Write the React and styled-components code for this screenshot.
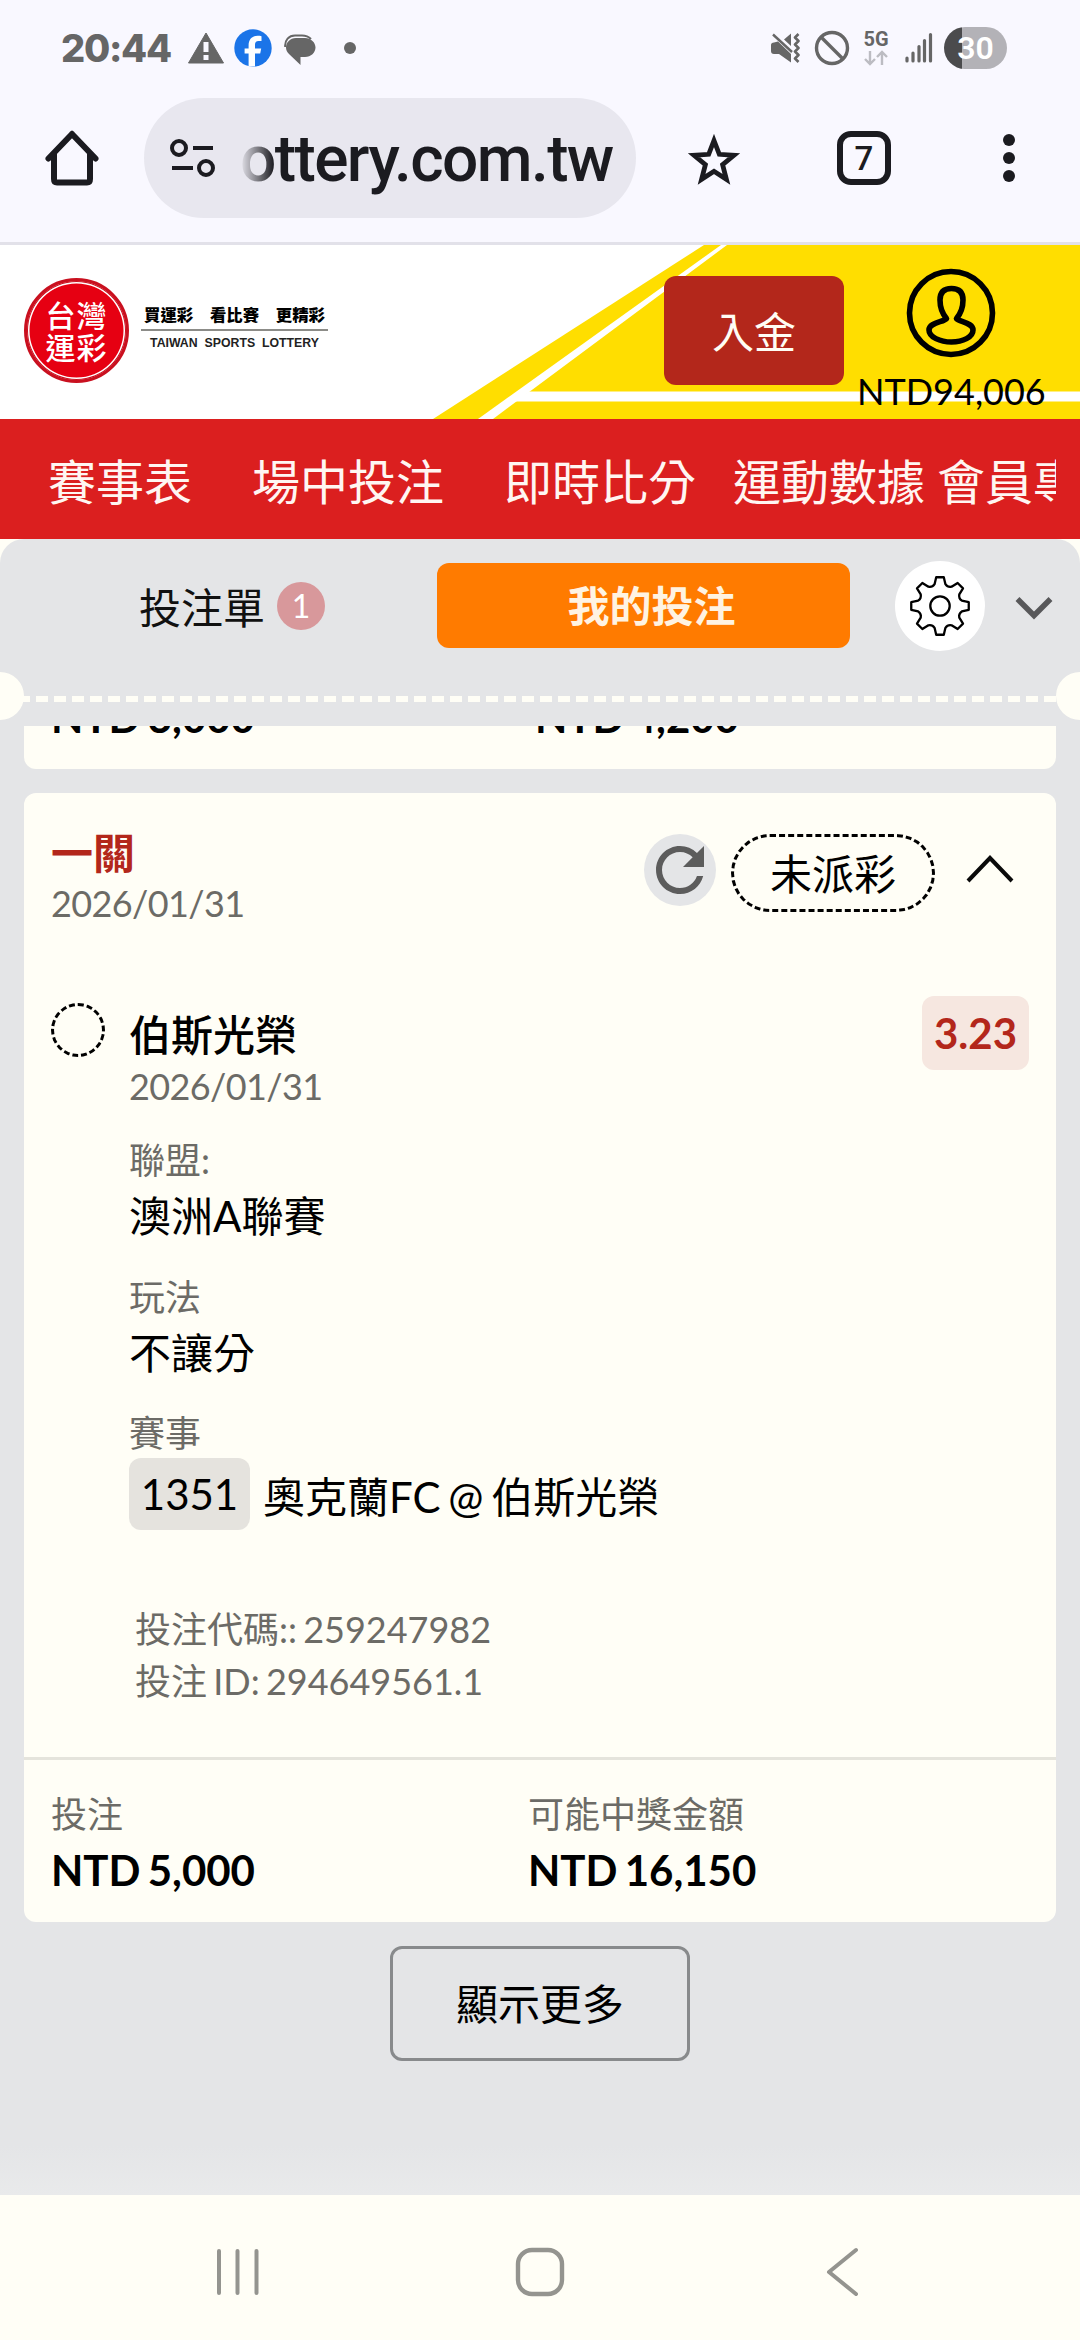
import styled, { createGlobalStyle } from "styled-components";
import { MdRefresh } from "react-icons/md";

const menu = [
    { label: "賽事表", gap: 60 },
    { label: "場中投注", gap: 60 },
    { label: "即時比分", gap: 37 },
    { label: "運動數據", gap: 12 },
    { label: "會員專區", gap: 0 },
];

const details = [
    { label: "聯盟:", value: "澳洲A聯賽" },
    { label: "玩法", value: "不讓分" },
];

export default function App(){
    return (
        <Screen>
            <GlobalStyle />
            <StatusBar />
            <BrowserBar />
            <SiteHeader />
            <Menu>
                <MenuItems>
                    {menu.map((item) => (
                        <MenuItem key={item.label} $gap={item.gap}>{item.label}</MenuItem>
                    ))}
                </MenuItems>
            </Menu>
            <PanelWrap>
                <Panel>
                    <Tabs />
                    <TearLine />
                    <BetList>
                        <Card $cut>
                            <CardFooter stake="NTD 3,000" prize="NTD 4,200" shift={7} />
                        </Card>
                        <BetCard />
                        <MoreButton>顯示更多</MoreButton>
                    </BetList>
                </Panel>
            </PanelWrap>
            <SystemNav />
        </Screen>
    );
}

function StatusBar(){
    return (
        <Status>
            <Clock>20:44</Clock>
            <svg width="36" height="32" viewBox="0 0 36 32">
                <path d="M18 1 L35.5 31 H0.5 Z" fill="#666" stroke="#666" strokeWidth="1" strokeLinejoin="round" />
                <rect x="15.5" y="10" width="5" height="10" fill="#f9f8ff" />
                <rect x="15.5" y="23" width="5" height="5" fill="#f9f8ff" />
            </svg>
            <Facebook width="38" height="38" viewBox="0 0 38 38">
                <circle cx="19" cy="19" r="18.7" fill="#1b74e8" />
                <path d="M14.6 37.5V24.6h-4v-5h4v-3.2c0-6.3 3.4-9.6 9-9.6 1.7 0 2.8.1 3.9.4v4.9h-2.9c-2.6 0-3.6 1.2-3.6 3.9v3.6h6.2l-1 5H21V37.5z" fill="#fff" />
            </Facebook>
            <Chat width="32" height="32" viewBox="0 0 32 32">
                <path d="M1.2 13C0.5 6 5 1.5 11 1.5H18C22 1.5 25 3 27 5" fill="none" stroke="#666" strokeWidth="2" />
                <path d="M12 4H21C27 4 31.5 8.5 31.5 13.5S27 23 21 23H16.5V31L5 20C3 18 2 16 2 13.5C2 8.5 6 4 12 4Z" fill="#666" />
            </Chat>
            <Dot />
            <Spacer />
            <svg width="30" height="32" viewBox="0 0 30 32">
                <path d="M1 13Q1 10.5 4 10.5L8 9.5L21 22V30.5L9 22H4Q1 22 1 19ZM14 7.5L21 1.5V14Z" fill="#666" />
                <path d="M3 2.5L22 20" stroke="#666" strokeWidth="2.4" />
                <path d="M28.5 2L25 5.5L28.5 9L25 12.5L28.5 16L25 19.5L28.5 23L25 26.5L28.5 30" fill="none" stroke="#666" strokeWidth="2.6" strokeLinejoin="round" />
            </svg>
            <Blocked width="36" height="36" viewBox="0 0 36 36">
                <circle cx="18" cy="18" r="15.5" fill="none" stroke="#666" strokeWidth="3.4" />
                <path d="M7.5 7.5L28.5 28.5" stroke="#666" strokeWidth="3.4" />
            </Blocked>
            <Network>
                <span>5G</span>
                <svg width="24" height="16" viewBox="0 0 24 16">
                    <path d="M6 1V14M1 9L6 14L11 9M18 15V2M13 7L18 2L23 7" fill="none" stroke="#bcbcc2" strokeWidth="2.4" />
                </svg>
            </Network>
            <svg width="28" height="32" viewBox="0 0 28 32">
                <path d="M2 26V29M8 21V29M14 14.5V29M19.5 8.5V29M25.5 2.5V29" stroke="#666" strokeWidth="3.2" strokeLinecap="round" />
            </svg>
            <Battery>30</Battery>
        </Status>
    );
}

function BrowserBar(){
    return (
        <Toolbar>
            <svg width="56" height="58" viewBox="0 0 56 58">
                <path d="M28 5L4.5 29.5M28 5L51.5 29.5" stroke="#1b1b20" strokeWidth="6" strokeLinecap="round" />
                <path d="M10 25V50Q10 53.5 13 53.5H43Q46 53.5 46 50V25" fill="none" stroke="#1b1b20" strokeWidth="6" />
            </svg>
            <Address>
                <svg width="46" height="40" viewBox="0 0 46 40">
                    <g fill="none" stroke="#1b1b20" strokeWidth="4">
                        <circle cx="10" cy="10" r="7" />
                        <circle cx="37" cy="30" r="7" />
                        <path d="M24 10H44M3 30H24" />
                    </g>
                </svg>
                <Url>ottery.com.tw</Url>
            </Address>
            <Star width="54" height="52" viewBox="0 0 54 52">
                <path d="M27 6.5L32.3 20.3L47 21.3L35.6 30.7L39.4 45.3L27 37.3L14.6 45.3L18.4 30.7L7 21.3L21.7 20.3Z" fill="none" stroke="#1b1b20" strokeWidth="4.8" />
            </Star>
            <TabCount>7</TabCount>
            <Dots>
                <i /><i /><i />
            </Dots>
        </Toolbar>
    );
}

function SiteHeader(){
    return (
        <Header>
            <Stripes width="1080" height="174" viewBox="0 0 1080 174">
                <path d="M433 174L704 0H1080V174Z" fill="#ffde00" />
                <path d="M478 174L721 0H727L493 174Z" fill="#fff" />
                <path d="M514 156.5L529 146.5H1080V156.5Z" fill="#fff" />
            </Stripes>
            <Seal>
                <span>台灣</span>
                <span>運彩</span>
            </Seal>
            <Slogan>
                <p><span>買運彩</span><span>看比賽</span><span>更精彩</span></p>
                <small>TAIWAN SPORTS LOTTERY</small>
            </Slogan>
            <Deposit>入金</Deposit>
            <Account>
                <svg width="90" height="90" viewBox="0 0 90 90">
                    <g fill="none" stroke="#000" strokeWidth="5.6">
                        <circle cx="45" cy="45" r="41.5" />
                        <path d="M40.5 50.5C35 44 34 39 34 32C34 24 38 20.5 45.5 20.5S57 24 57 32C57 39 56 44 50.5 50.5C53 54 67 54.5 67 62C67 69 57 74 45.5 74S23 69 23 62C23 54.5 38 54 40.5 50.5Z" strokeLinejoin="round" />
                    </g>
                </svg>
                <Balance>NTD94,006</Balance>
            </Account>
        </Header>
    );
}

function Tabs(){
    return (
        <TabRow>
            <SlipTab>
                投注單
                <Counter>1</Counter>
            </SlipTab>
            <ActiveTab>我的投注</ActiveTab>
            <GearButton>
                <svg width="62" height="62" viewBox="-31 -31 62 62">
                    <g fill="none" stroke="#000" strokeWidth="2.3" strokeLinejoin="round">
                        <path d={gearPath()} />
                        <circle cx="0" cy="0" r="9.7" />
                    </g>
                </svg>
            </GearButton>
            <svg width="40" height="26" viewBox="0 0 40 26">
                <path d="M3.5 4L20 20.5L36.5 4" fill="none" stroke="#58585a" strokeWidth="5.5" />
            </svg>
        </TabRow>
    );
}

// eight teeth around the centre, with curved valleys between them
function gearPath(){
    const point = (deg, r) => {
        const a = (deg * Math.PI) / 180;
        return `${(r * Math.cos(a)).toFixed(2)} ${(r * Math.sin(a)).toFixed(2)}`;
    };
    let d = "";
    for (let i = 0; i < 8; i++) {
        const c = i * 45 - 90;
        d += `${i === 0 ? "M" : "L"}${point(c - 7.5, 29)}L${point(c + 7.5, 29)}L${point(c + 14, 22.5)}Q${point(c + 22.5, 20)} ${point(c + 31, 22.5)}`;
    }
    return d + "Z";
}

function BetCard(){
    return (
        <Card>
            <CardTop>
                <div>
                    <Title>一關</Title>
                    <DateText>2026/01/31</DateText>
                </div>
                <Actions>
                    <RefreshButton><MdRefresh /></RefreshButton>
                    <StatusPill>未派彩</StatusPill>
                    <svg width="50" height="30" viewBox="0 0 50 30">
                        <path d="M3 27L25 4L47 27" fill="none" stroke="#0a0a0a" strokeWidth="4" />
                    </svg>
                </Actions>
            </CardTop>
            <Leg>
                <Pending />
                <LegBody>
                    <Pick>伯斯光榮</Pick>
                    <DateText>2026/01/31</DateText>
                    {details.map((item) => (
                        <Detail key={item.label}>
                            <Muted>{item.label}</Muted>
                            <Value>{item.value}</Value>
                        </Detail>
                    ))}
                    <Detail>
                        <Muted>賽事</Muted>
                        <Match>
                            <MatchNumber>1351</MatchNumber>
                            奧克蘭FC @ 伯斯光榮
                        </Match>
                    </Detail>
                    <Codes>
                        <p>投注代碼:: 259247982</p>
                        <p>投注 ID: 294649561.1</p>
                    </Codes>
                </LegBody>
                <Odds>3.23</Odds>
            </Leg>
            <CardFooter stake="NTD 5,000" prize="NTD 16,150" line />
        </Card>
    );
}

function CardFooter(props){

    const {stake, prize, line, shift = 0} = props;

    return (
        <Footer $line={line} $shift={shift}>
            <div>
                <Muted>投注</Muted>
                <Amount>{stake}</Amount>
            </div>
            <div>
                <Muted>可能中獎金額</Muted>
                <Amount>{prize}</Amount>
            </div>
        </Footer>
    );
}

function SystemNav(){
    return (
        <NavBar>
            <svg width="50" height="50" viewBox="0 0 50 50">
                <path d="M6 4V46M24.5 4V46M43.5 4V46" stroke="#94948f" strokeWidth="4" strokeLinecap="round" />
            </svg>
            <svg width="50" height="50" viewBox="0 0 50 50">
                <rect x="3" y="3" width="44" height="44" rx="14" fill="none" stroke="#94948f" strokeWidth="4.4" />
            </svg>
            <svg width="50" height="50" viewBox="0 0 50 50">
                <path d="M39 3L12 25L39 47" fill="none" stroke="#94948f" strokeWidth="4" strokeLinecap="round" strokeLinejoin="round" />
            </svg>
        </NavBar>
    );
}

const GlobalStyle = createGlobalStyle`
    * {
        box-sizing: border-box;
        margin: 0;
        padding: 0;
    }

    body {
        font-family: Lato, "Noto Sans CJK TC", sans-serif;
        background: #fffef6;
        color: #000;
    }

    svg {
        display: block;
        flex-shrink: 0;
    }
`;

const Screen = styled.div`
    width: 1080px;
    height: 2340px;
    display: flex;
    flex-direction: column;
    overflow: hidden;
`;

const Status = styled.div`
    height: 96px;
    padding: 0 73px 0 61px;
    display: flex;
    align-items: center;
    background: #f9f8ff;
    color: #666;
`;

const Clock = styled.span`
    width: 127px;
    font-family: Inter, sans-serif;
    font-size: 38px;
    font-weight: 800;
    letter-spacing: -1.3px;
    white-space: nowrap;
`;

const Facebook = styled.svg`
    margin: 0 12px 0 10px;
`;

const Chat = styled.svg`
    margin-top: 4px;
`;

const Dot = styled.i`
    width: 12px;
    height: 12px;
    margin-left: 28px;
    border-radius: 50%;
    background: #666;
`;

const Spacer = styled.div`
    flex: 1;
`;

const Blocked = styled.svg`
    margin: 0 14px 0 14px;
`;

const Network = styled.div`
    width: 24px;
    margin-right: 17px;
    display: flex;
    flex-direction: column;
    align-items: center;
    gap: 2px;

    span {
        font-family: Roboto, sans-serif;
        font-size: 20px;
        font-weight: 700;
        line-height: 17px;
    }
`;

const Battery = styled.div`
    width: 63px;
    height: 42px;
    margin-left: 11px;
    border-radius: 21px;
    background: linear-gradient(90deg, #4b4b4d 18px, #b3b2b7 18px);
    color: #fff;
    font-family: Roboto, sans-serif;
    font-size: 32px;
    font-weight: 600;
    line-height: 42px;
    text-align: center;
`;

const Toolbar = styled.div`
    height: 149px;
    padding: 2px 65px 24px 44px;
    display: flex;
    align-items: center;
    background: #f9f8ff;
    border-bottom: 3px solid #e2e1e9;
`;

const Address = styled.div`
    width: 492px;
    height: 120px;
    margin-left: 44px;
    padding-left: 25px;
    display: flex;
    align-items: center;
    border-radius: 60px;
    background: #e8e7ef;
`;

const Url = styled.span`
    margin: 3px 0 0 25px;
    color: #1b1b20;
    font-family: Roboto, sans-serif;
    font-size: 64px;
    font-weight: 500;
    letter-spacing: -1.6px;
    line-height: 84px;
    mask-image: linear-gradient(90deg, transparent 0, #000 34px);
`;

const Star = styled.svg`
    margin: 4px 0 0 51px;
`;

const TabCount = styled.div`
    width: 54px;
    height: 54px;
    margin-left: 96px;
    border: 6px solid #1b1b20;
    border-radius: 14px;
    color: #1b1b20;
    font-family: Roboto, sans-serif;
    font-size: 33px;
    font-weight: 500;
    line-height: 43px;
    text-align: center;
`;

const Dots = styled.div`
    margin-left: auto;
    display: flex;
    flex-direction: column;
    gap: 6px;

    i {
        width: 12px;
        height: 12px;
        border-radius: 50%;
        background: #1b1b20;
    }
`;

const Header = styled.header`
    position: relative;
    height: 174px;
    padding: 0 24px;
    display: flex;
    background: #fff;
`;

const Stripes = styled.svg`
    position: absolute;
    inset: 0;
`;

const Seal = styled.div`
    width: 105px;
    height: 105px;
    margin-top: 33px;
    display: flex;
    flex-direction: column;
    align-items: center;
    justify-content: center;
    border: 3px solid #c9101f;
    border-radius: 50%;
    background: #e60012;
    box-shadow: inset 0 0 0 1px #c9101f, inset 0 0 0 2.5px #fff;
    color: #fff;
    font-size: 30px;
    font-weight: 500;
    letter-spacing: 1px;
    line-height: 32px;

    span {
        height: 32px;
    }
`;

const Slogan = styled.div`
    width: 187px;
    margin: 58px 336px 0 12px;

    p {
        height: 28px;
        padding: 0 3px;
        display: flex;
        justify-content: space-between;
        border-bottom: 2px solid #8c8c88;
        font-size: 16.4px;
        font-weight: 900;
        line-height: 24px;
    }

    small {
        display: block;
        padding-top: 4px;
        color: #222;
        font-family: "Liberation Sans", sans-serif;
        font-size: 12.3px;
        font-weight: 700;
        line-height: 16px;
        text-align: center;
        white-space: nowrap;
        word-spacing: 3.5px;
    }
`;

const Deposit = styled.button`
    position: relative;
    width: 180px;
    height: 109px;
    margin-top: 31px;
    padding-top: 3px;
    border: 0;
    border-radius: 12px;
    background: #b3271b;
    color: #fffdf5;
    font: 400 42px/50px Lato, "Noto Sans CJK TC", sans-serif;
`;

const Account = styled.div`
    position: relative;
    margin: 23px 0 0 13px;
    display: flex;
    flex-direction: column;
    align-items: center;
`;

const Balance = styled.span`
    margin-top: 11px;
    font-size: 36px;
    line-height: 44px;
`;

const Menu = styled.nav`
    height: 120px;
    padding: 0 24px;
    background: #db1f1f;
    color: #fff6f2;
`;

const MenuItems = styled.div`
    padding: 31px 0 0 24px;
    display: flex;
    overflow: hidden;
`;

const MenuItem = styled.span`
    flex-shrink: 0;
    margin-right: ${(props) => props.$gap}px;
    font-size: 48px;
    line-height: 64px;
`;

const PanelWrap = styled.div`
    height: 1656px;
    background: #fffef6;
`;

const Panel = styled.main`
    height: 100%;
    display: flex;
    flex-direction: column;
    border-radius: 24px 24px 0 0;
    background: linear-gradient(#e4e5e7 97%, #e9eaeb);
    overflow: hidden;
`;

const TabRow = styled.div`
    height: 133px;
    padding: 22px 26px 0 139px;
    display: flex;
    align-items: flex-start;

    > svg {
        margin: 34px 0 0 29px;
    }
`;

const SlipTab = styled.div`
    width: 298px;
    height: 89px;
    display: flex;
    align-items: center;
    gap: 12px;
    font-size: 42px;
    color: #111;
`;

const Counter = styled.span`
    width: 48px;
    height: 48px;
    border-radius: 50%;
    background: #d8989b;
    color: #fff;
    font-size: 32px;
    line-height: 47px;
    text-align: center;
`;

const ActiveTab = styled.div`
    width: 413px;
    height: 85px;
    margin-top: 2px;
    padding: 1px 0 0 16px;
    border-radius: 12px;
    background: #ff7b00;
    color: #fff3e2;
    font-size: 42px;
    font-weight: 700;
    line-height: 85px;
    text-align: center;
`;

const GearButton = styled.div`
    width: 90px;
    height: 90px;
    margin-left: 45px;
    display: flex;
    align-items: center;
    justify-content: center;
    border-radius: 50%;
    background: #fff;
`;

const TearLine = styled.div`
    height: 54px;
    margin: 0 -24px;
    flex-shrink: 0;
    display: flex;
    justify-content: space-between;
    background: repeating-linear-gradient(90deg, #fffef6 0 12px, transparent 12px 18px) 42px 24px / 1040px 6px no-repeat;

    &::before, &::after {
        content: "";
        width: 48px;
        height: 48px;
        border-radius: 50%;
        background: #fffef6;
    }
`;

const BetList = styled.div`
    flex: 1;
    min-height: 0;
    padding: 0 24px;
    display: flex;
    flex-direction: column;
    align-items: center;
    overflow: hidden;
    word-spacing: -3px;
`;

const Card = styled.section`
    width: 100%;
    flex-shrink: 0;
    margin-top: ${(props) => (props.$cut ? "-119px" : "24px")};
    border-radius: 12px;
    background: #fffef6;
`;

const CardTop = styled.div`
    height: 210px;
    padding: 35px 41px 0 27px;
    display: flex;
    justify-content: space-between;
`;

const Title = styled.h2`
    margin-bottom: 4px;
    color: #b3271b;
    font-size: 42px;
    font-weight: 700;
    line-height: 50px;
`;

const Muted = styled.p`
    color: #6c6b66;
    font-size: 36px;
    line-height: 43px;
`;

const DateText = styled(Muted)`
    letter-spacing: -0.6px;
`;

const Actions = styled.div`
    height: 78px;
    margin-top: 6px;
    display: flex;

    > svg {
        margin: 20px 0 0 30px;
    }
`;

const RefreshButton = styled.div`
    width: 72px;
    height: 72px;
    margin-right: 15px;
    border-radius: 50%;
    background: #e4e5e7;
    color: #5c5c5c;
    font-size: 72px;
`;

const StatusPill = styled.div`
    width: 204px;
    height: 78px;
    border: 3px dashed #000;
    border-radius: 39px;
    font-size: 42px;
    line-height: 75px;
    text-align: center;
`;

const Leg = styled.div`
    height: 754px;
    padding: 0 27px;
    display: flex;
    align-items: flex-start;
`;

const Pending = styled.i`
    width: 54px;
    height: 54px;
    border: 3px dashed #000;
    border-radius: 50%;
`;

const LegBody = styled.div`
    flex: 1;
    padding: 7px 0 0 24px;
`;

const Pick = styled.h3`
    margin-bottom: 5px;
    font-size: 42px;
    font-weight: 500;
    line-height: 50px;
`;

const Detail = styled.div`
    margin-top: 31px;
`;

const Value = styled.p`
    margin-top: 9px;
    margin-bottom: 34.5px;
    font-size: 42px;
    line-height: 50px;
`;

const Match = styled.div`
    height: 72px;
    margin-top: 3px;
    display: flex;
    align-items: center;
    font-size: 42px;
`;

const MatchNumber = styled.span`
    width: 121px;
    height: 72px;
    margin-right: 13px;
    border-radius: 12px;
    background: #e5e3de;
    line-height: 72px;
    text-align: center;
`;

const Codes = styled.div`
    margin-top: 73px;
    padding-left: 6px;
    color: #6c6b66;
    font-size: 36px;
    line-height: 52px;
`;

const Odds = styled.div`
    width: 107px;
    height: 74px;
    margin-top: -7px;
    border-radius: 12px;
    background: #f6e7e0;
    color: #b3271b;
    font-size: 42px;
    font-weight: 700;
    line-height: 74px;
    text-align: center;
`;

const Footer = styled.div`
    padding: 33px 27px 27px;
    display: grid;
    grid-template-columns: ${(props) => 477 + props.$shift}px 1fr;
    border-top: ${(props) => (props.$line ? "3px solid #e5e4dc" : "0")};
`;

const Amount = styled.p`
    margin-top: 9px;
    font-size: 42px;
    font-weight: 700;
    line-height: 50px;
`;

const MoreButton = styled.button`
    width: 300px;
    height: 115px;
    flex-shrink: 0;
    margin-top: 24px;
    border: 3px solid #888a8c;
    border-radius: 12px;
    background: transparent;
    color: #000;
    font: 400 42px/50px Lato, "Noto Sans CJK TC", sans-serif;
`;

const NavBar = styled.footer`
    flex: 1;
    padding: 9px 213px 0 213px;
    display: flex;
    align-items: center;
    justify-content: space-between;
    background: #fffef6;
`;
